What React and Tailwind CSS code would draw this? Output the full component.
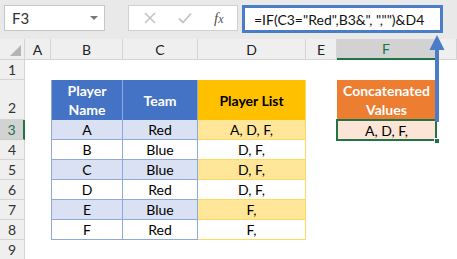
import React from "react";

const cols = ["A", "B", "C", "D", "E", "F", ""];

const rows = [
  { name: "A", team: "Red", list: "A, D, F," },
  { name: "B", team: "Blue", list: "D, F," },
  { name: "C", team: "Blue", list: "D, F," },
  { name: "D", team: "Red", list: "D, F," },
  { name: "E", team: "Blue", list: "F," },
  { name: "F", team: "Red", list: "F," },
];

function ColHeader({ label, active }) {
  if (active) {
    return (
      <div className="flex items-center justify-center border-r border-b-2 border-r-[#c8c8c8] border-b-[#217346] bg-[#d2d2d2] text-[14px] text-[#217346]">
        {label}
      </div>
    );
  }
  return (
    <div className="flex items-center justify-center border-r border-b border-[#d4d4d4] bg-[#efefef] text-[14px] text-[#222]">
      {label}
    </div>
  );
}

function RowHeader({ n, active, bottom }) {
  const align = bottom ? "items-end pb-[1px]" : "items-center";
  if (active) {
    return (
      <div className={`flex justify-center border-b border-r-2 border-b-[#c8c8c8] border-r-[#217346] bg-[#d2d2d2] text-[14px] text-[#217346] ${align}`}>
        {n}
      </div>
    );
  }
  return (
    <div className={`flex justify-center border-b border-r border-[#d4d4d4] bg-[#efefef] text-[14px] text-[#333] ${align}`}>
      {n}
    </div>
  );
}

const Blank = () => <div className="bg-white" />;

export default function App() {
  return (
    <div className="relative h-[259px] w-[457px] overflow-hidden bg-white font-['Lato',sans-serif]">
      {/* formula bar */}
      <div className="flex h-[39px] items-start bg-[#e9e9e9] pt-[5px]">
        <div className="ml-[4px] flex h-[26px] w-[101px] items-center justify-between border border-[#c6c6c6] bg-white pl-[7px] pr-[6px] text-[15px] text-[#333]">
          <span>F3</span>
          <span className="h-0 w-0 border-x-[4px] border-t-[4px] border-x-transparent border-t-[#777]" />
        </div>
        <div className="ml-[23px] flex h-[26px] w-[110px] items-center border border-[#d0d0d0] bg-white text-[#bbb]">
          <svg width="12" height="12" viewBox="0 0 12 12" className="ml-[15px]">
            <path d="M1 1L11 11M11 1L1 11" stroke="#c4c4c4" strokeWidth="1.6" />
          </svg>
          <svg width="14" height="12" viewBox="0 0 14 12" className="ml-[22px]">
            <path d="M1 6.5L5 10.5L13 1.5" stroke="#c4c4c4" strokeWidth="1.8" fill="none" />
          </svg>
          <span className="ml-[22px] font-['Liberation_Serif',serif] text-[15px] italic text-[#555]">
            f<span className="text-[12px]">x</span>
          </span>
        </div>
        <div className="ml-[4px] flex h-[28px] w-[201px] items-center overflow-hidden whitespace-nowrap border-[3px] border-[#4a7cc8] bg-white pl-[9px] text-[14px] text-[#111]">
          =IF(C3="Red",B3&amp;", ","")&amp;D4
        </div>
      </div>

      {/* sheet */}
      <div className="grid grid-cols-[25px_26px_72px_75px_108px_31px_99px_1fr] grid-rows-[21px_20px_40px_repeat(7,20px)]">
        {/* column headers */}
        <div className="relative border-r border-b border-[#d4d4d4] bg-[#efefef]">
          <span className="absolute bottom-[3px] right-[3px] h-0 w-0 border-b-[11px] border-l-[11px] border-b-[#b5b5b5] border-l-transparent" />
        </div>
        {cols.map((c, i) => (
          <ColHeader key={i} label={c} active={c === "F"} />
        ))}

        {/* row 1 */}
        <RowHeader n={1} />
        {cols.map((_, i) => (
          <Blank key={i} />
        ))}

        {/* row 2: table headers */}
        <RowHeader n={2} bottom />
        <Blank />
        <div className="flex items-center justify-center border-r border-l border-[#8ea9db] bg-[#4472c4] text-center text-[14px] font-bold leading-[19px] text-white">
          Player
          <br />
          Name
        </div>
        <div className="flex items-center justify-center border-r border-[#8ea9db] bg-[#4472c4] text-[14px] font-bold text-white">
          Team
        </div>
        <div className="flex items-center justify-center border-r border-[#ffd966] bg-[#ffc000] text-[14px] font-bold text-black">
          Player List
        </div>
        <Blank />
        <div className="flex items-center justify-center bg-[#ed7d31] text-center text-[14px] font-bold leading-[19px] text-white">
          Concatenated
          <br />
          Values
        </div>
        <Blank />

        {/* rows 3-8 */}
        {rows.map((r, i) => {
          const striped = i % 2 === 0;
          return (
            <React.Fragment key={r.name}>
              <RowHeader n={i + 3} active={i === 0} />
              <Blank />
              <div className={`flex items-center justify-center border-r border-b border-l border-[#8ea9db] text-[14px] text-black ${striped ? "bg-[#d9e1f2]" : "bg-white"}`}>
                {r.name}
              </div>
              <div className={`flex items-center justify-center border-r border-b border-[#8ea9db] text-[14px] text-black ${striped ? "bg-[#d9e1f2]" : "bg-white"}`}>
                {r.team}
              </div>
              <div className={`flex items-center justify-center border-r border-b border-[#ffd966] text-[14px] text-black ${striped ? "bg-[#ffe699]" : "bg-white"}`}>
                {r.list}
              </div>
              <Blank />
              {i === 0 ? (
                <div className="relative flex items-center justify-center bg-[#fce4d6] text-[14px] text-black">
                  A, D, F,
                  <span className="absolute -inset-[1px] border-2 border-[#217346]" />
                  <span className="absolute -bottom-[4px] -right-[4px] h-[6px] w-[6px] border border-white bg-[#217346]" />
                </div>
              ) : (
                <Blank />
              )}
              <Blank />
            </React.Fragment>
          );
        })}

        {/* row 9 */}
        <RowHeader n={9} />
        {cols.map((_, i) => (
          <Blank key={i} />
        ))}
      </div>

      {/* arrow from the result cell up to the formula */}
      <svg className="pointer-events-none absolute left-0 top-0" width="457" height="259">
        <rect x="435" y="48" width="4" height="74" fill="#4a7cc8" />
        <polygon points="429.5,50 437,35 444.5,50" fill="#4a7cc8" />
      </svg>
    </div>
  );
}
